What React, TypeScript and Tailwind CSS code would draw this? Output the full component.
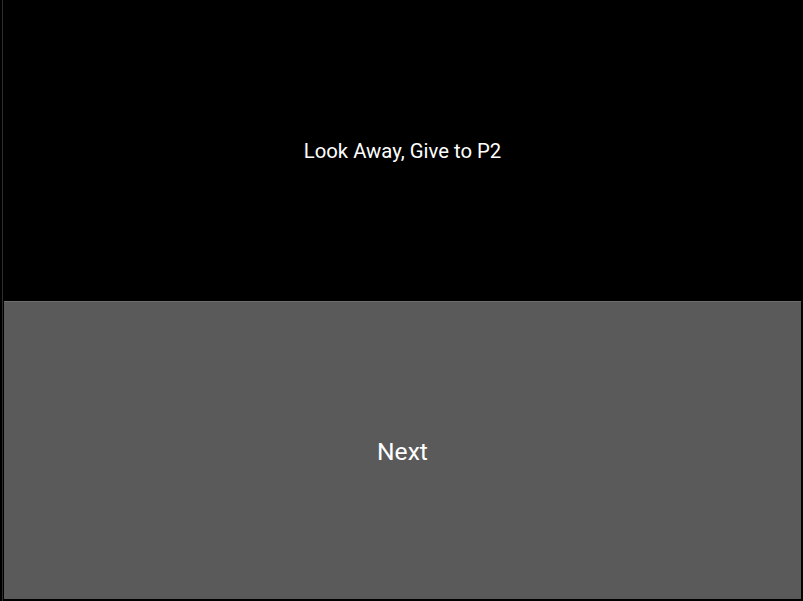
export default function App() {
  return (
    <div
      className="flex h-[601px] w-[803px] bg-black text-white"
      style={{ fontFamily: 'Roboto, "Noto Sans", sans-serif' }}
    >
      {/* thin left edge */}
      <div className="ml-[2px] w-px bg-[#2e2e2e]" />
      <div className="flex flex-1 flex-col pl-px pr-[2px] pb-[2px]">
        <div className="flex h-[301px] items-center justify-center pt-px">
          <span className="text-[20.3px]">Look Away, Give to P2</span>
        </div>
        <button className="flex flex-1 items-center justify-center border-t border-[#6e6e6e] bg-[#5a5a5a] pt-[3px] text-[24.6px] text-white">
          Next
        </button>
      </div>
    </div>
  );
}
